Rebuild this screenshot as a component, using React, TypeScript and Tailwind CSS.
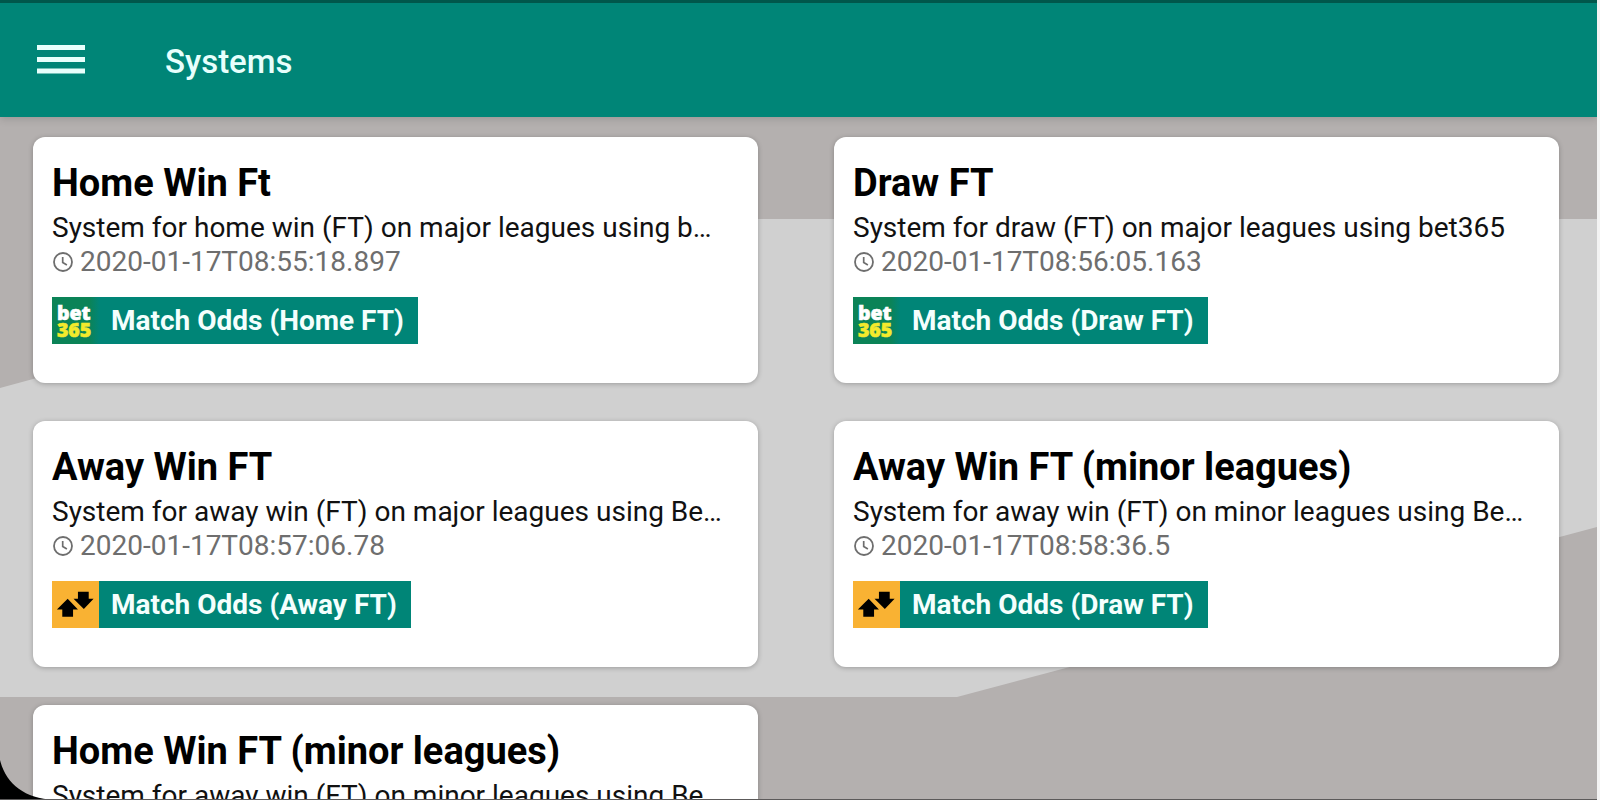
type Bookmaker = "bet365" | "betfair";

type System = {
  name: string;
  description: string;
  created: string;
  bookmaker: Bookmaker;
  market: string;
};

const systems: System[] = [
  {
    name: "Home Win Ft",
    description: "System for home win (FT) on major leagues using b…",
    created: "2020-01-17T08:55:18.897",
    bookmaker: "bet365",
    market: "Match Odds (Home FT)",
  },
  {
    name: "Draw FT",
    description: "System for draw (FT) on major leagues using bet365",
    created: "2020-01-17T08:56:05.163",
    bookmaker: "bet365",
    market: "Match Odds (Draw FT)",
  },
  {
    name: "Away Win FT",
    description: "System for away win (FT) on major leagues using Be…",
    created: "2020-01-17T08:57:06.78",
    bookmaker: "betfair",
    market: "Match Odds (Away FT)",
  },
  {
    name: "Away Win FT (minor leagues)",
    description: "System for away win (FT) on minor leagues using Be…",
    created: "2020-01-17T08:58:36.5",
    bookmaker: "betfair",
    market: "Match Odds (Draw FT)",
  },
  {
    name: "Home Win FT (minor leagues)",
    description: "System for away win (FT) on minor leagues using Be…",
    created: "2020-01-17T08:59:41.27",
    bookmaker: "betfair",
    market: "Match Odds (Home FT)",
  },
];

function ClockIcon() {
  return (
    <svg viewBox="0 0 20 20" className="size-5 shrink-0" fill="none" stroke="currentColor" aria-hidden="true">
      <circle cx="10" cy="10" r="9" strokeWidth="1.8" />
      <path d="M9.700 5v5.400l4.200 2.500" strokeWidth="1.7" />
    </svg>
  );
}

function Bet365Logo() {
  return (
    <svg viewBox="0 0 48 48" className="size-[47px] shrink-0" role="img" aria-label="bet365">
      <defs>
        <linearGradient id="bet365-bg">
          <stop offset="0" stopColor="#0b8357" />
          <stop offset="0.8" stopColor="#0b8357" />
          <stop offset="1" stopColor="#018576" />
        </linearGradient>
      </defs>
      <rect width="48" height="48" fill="url(#bet365-bg)" />
      <g fontFamily="'Open Sans', sans-serif" fontWeight="800" fontSize="20" strokeWidth="0.6">
        <text x="5" y="23" fill="#fff" stroke="#fff">bet</text>
        <text x="5" y="41" fill="#f3ea2c" stroke="#f3ea2c">365</text>
      </g>
    </svg>
  );
}

function BetfairLogo() {
  return (
    <svg viewBox="0 0 48 48" className="size-[47px] shrink-0" role="img" aria-label="Betfair">
      <rect width="48" height="48" fill="#f9b233" />
      <path d="M16 18 26.500 29H21.500V36.500H10.500V29H5Z" />
      <path d="M26.500 11H37.500V18H42.500L32.500 28.500 22 18H26.500Z" />
    </svg>
  );
}

function SystemCard({ system }: { system: System }) {
  return (
    <article className="min-w-0 rounded-xl bg-white px-[19px] pt-6 pb-[39px] shadow-[0_1px_5px_rgba(0,0,0,0.25)]">
      <h2 className="truncate text-[38px] leading-[44px] font-bold text-black">{system.name}</h2>
      <p className="mt-1.5 truncate text-[28px] leading-[34px] text-[#111]">{system.description}</p>
      <div className="flex items-center gap-[7px] pl-px text-[28px] leading-[34px] text-[#6e6e6e]">
        <ClockIcon />
        <time dateTime={system.created}>{system.created}</time>
      </div>
      <div className="mt-[18px] flex w-fit items-center bg-[#008577]">
        {system.bookmaker === "bet365" ? <Bet365Logo /> : <BetfairLogo />}
        <span className="pr-3.5 pl-3 text-[28px] leading-[34px] font-bold text-[#f4fffd]">{system.market}</span>
      </div>
    </article>
  );
}

export default function App() {
  return (
    <div className="h-screen overflow-hidden bg-[#f3f3f3] pr-[3px] font-['Roboto',sans-serif]">
      <div className="relative isolate flex h-full flex-col overflow-hidden bg-[#b4b0af]">
        {/* page backdrop */}
        <svg
          viewBox="0 0 1597 800"
          preserveAspectRatio="none"
          className="absolute inset-0 -z-10 size-full"
          aria-hidden="true"
        >
          <path d="M0 388 620 219H1597V527L957 697H0Z" fill="#d0d0d0" />
        </svg>

        <header className="flex shrink-0 items-center border-t-3 border-[#00574b] bg-[#008577] py-[33px] pl-[37px] shadow-[0_2px_8px_rgba(0,0,0,0.15)]">
          <button type="button" aria-label="Open menu" className="mr-20">
            <svg viewBox="0 0 48 32" className="h-8 w-12" fill="#e8fffc" aria-hidden="true">
              <path d="M0 1h48v5H0zM0 13h48v5H0zM0 24.500h48v5H0z" />
            </svg>
          </button>
          <h1 className="pt-1 text-[33px] leading-[44px] font-medium text-[#e8fffc]">Systems</h1>
        </header>

        <main className="grid grid-cols-2 gap-x-[76px] gap-y-[38px] pt-5 pr-[38px] pb-[38px] pl-[33px]">
          {systems.map((system) => (
            <SystemCard key={system.name} system={system} />
          ))}
        </main>

        {/* rounded corner and bottom edge of the screen */}
        <svg viewBox="0 0 54 54" className="absolute bottom-0 left-0 size-[54px]" aria-hidden="true">
          <path d="M0 14C6 38 24 52 54 54H0Z" />
        </svg>
        <div className="absolute inset-x-0 bottom-0 h-px bg-[#5c5a5a]" />
      </div>
    </div>
  );
}
